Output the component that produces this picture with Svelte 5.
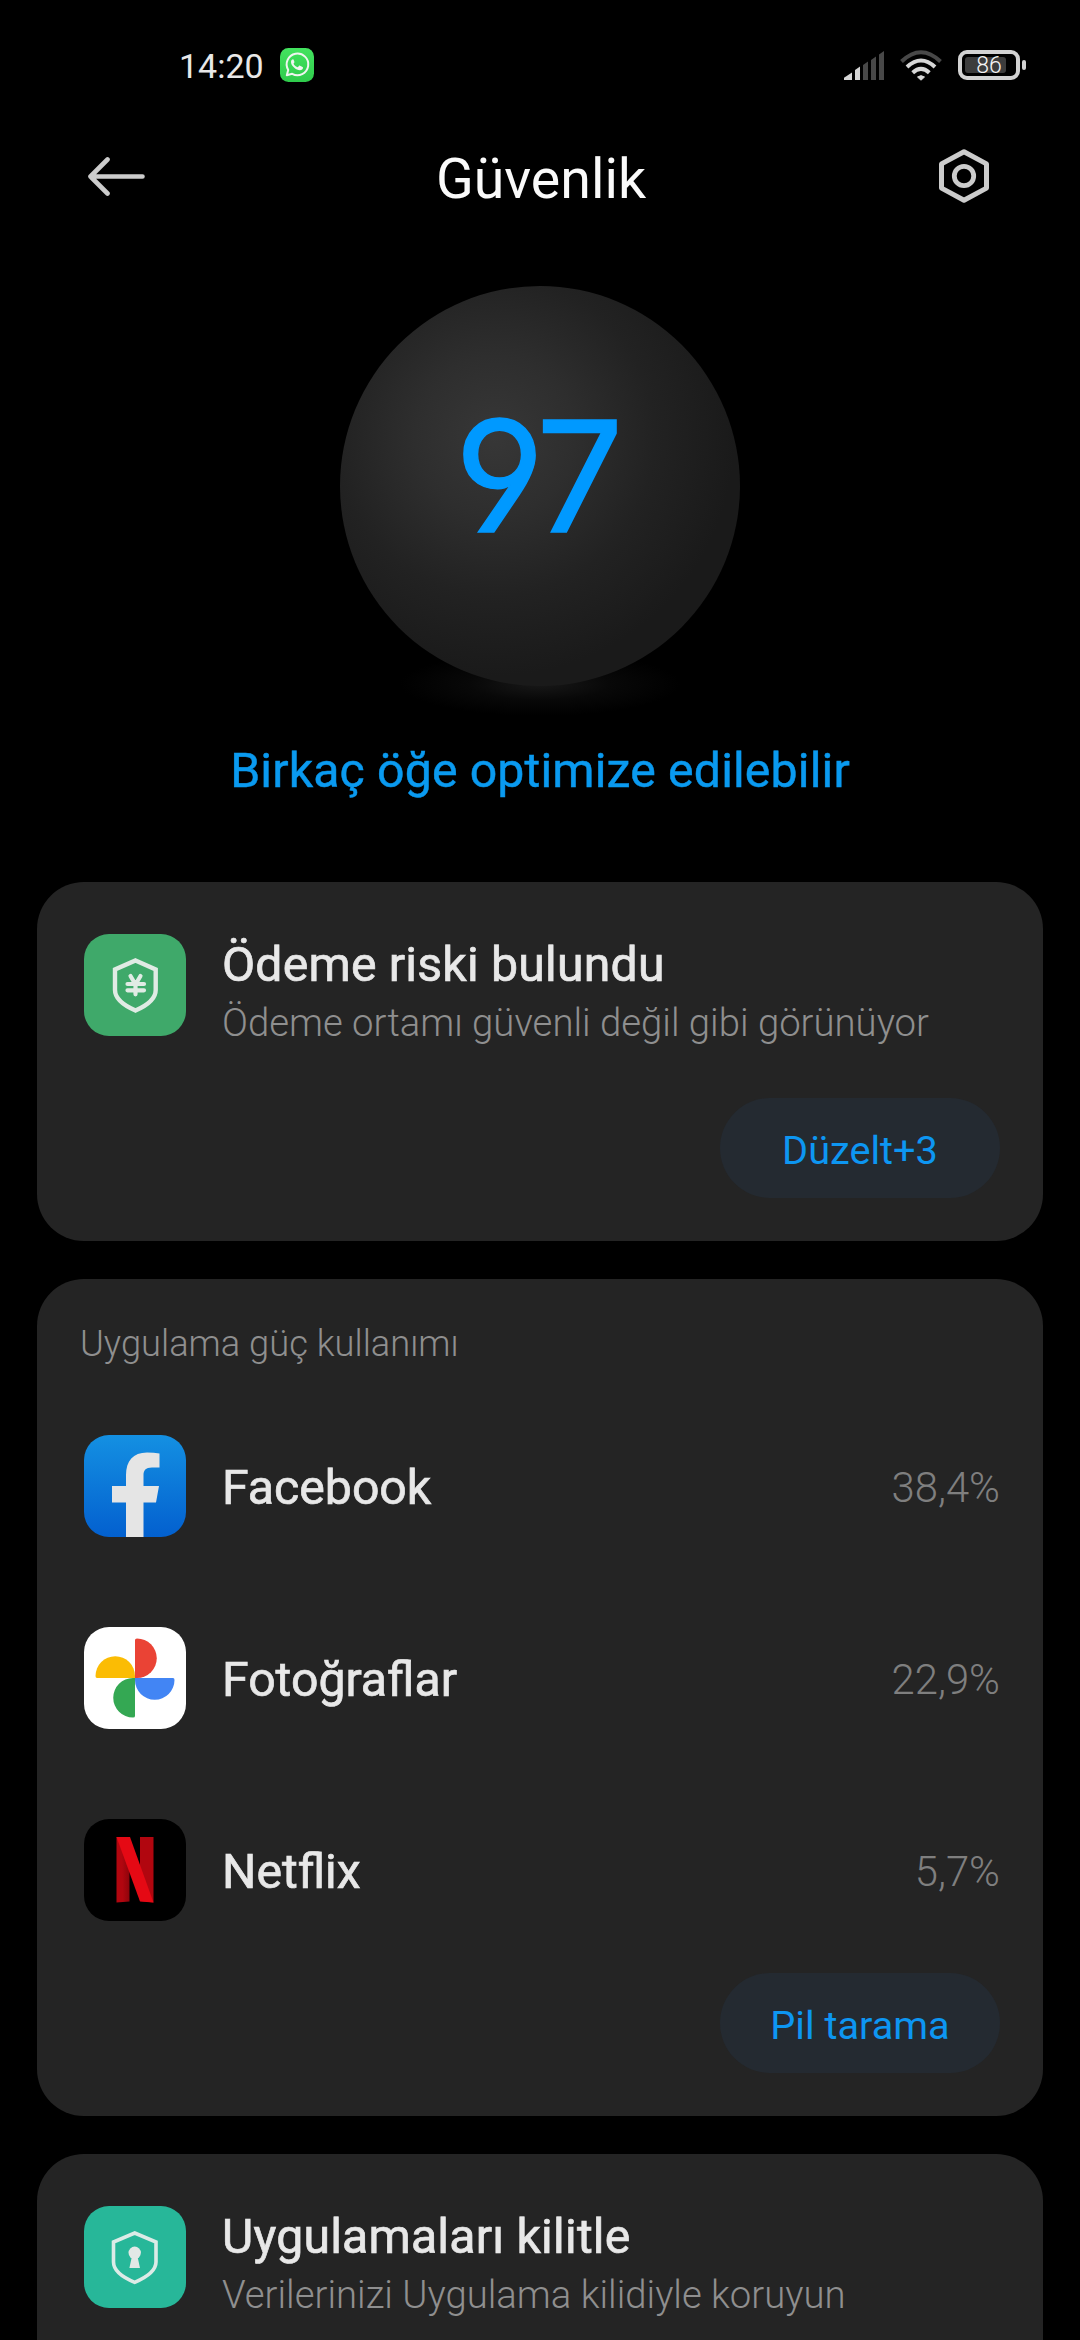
<script lang="ts">
	const apps = [
		{ id: 'facebook', name: 'Facebook', usage: '38,4%' },
		{ id: 'photos', name: 'Fotoğraflar', usage: '22,9%' },
		{ id: 'netflix', name: 'Netflix', usage: '5,7%' }
	];

	let score = 97;
	let battery = 86;
</script>

<svelte:head>
	<title>Güvenlik</title>
</svelte:head>

<div class="screen">
	<div class="status-bar">
		<div class="status-left">
			<span class="time">14:20</span>
			<svg class="whatsapp" viewBox="0 0 34 34">
				<defs>
					<linearGradient id="wa" x1="0" y1="0" x2="0" y2="1">
						<stop offset="0" stop-color="#43e35f" />
						<stop offset="1" stop-color="#2fcb4c" />
					</linearGradient>
				</defs>
				<rect width="34" height="34" rx="8.5" fill="url(#wa)" />
				<path d="M6.8 27.2L8.2 21.9A10.8 10.8 0 1 1 12.2 25.8Z" fill="none" stroke="#f0f5f0" stroke-width="2" stroke-linejoin="round" />
				<path d="M13 11.2c-.9 0-2 1.1-2 2.7 0 3.8 5.2 8.3 8.9 8.3 1.8 0 3.1-1.2 3.1-2.5 0-.6-.3-.8-3-2-.6-.2-.8-.1-1.9 1.3-.3.3-.6.3-1 .1-1.500-.7-2.700-1.800-3.400-3.200-.2-.4-.1-.5.500-1.200.3-.4.3-.6.1-1.200-.8-2-.8-2.200-1.300-2.300z" fill="#f0f5f0" />
			</svg>
		</div>
		<div class="status-right">
			<svg class="signal" viewBox="0 0 40 29">
				<path d="M0 29v-2.2L8 21.5V29z" fill="#d6d6d6" />
				<path d="M11 29V19l5-3.5V29z" fill="#d6d6d6" />
				<path d="M19 29V14l5-3.5V29zM27 29V9l5-3.5V29zM35 29V3.5L40 0V29z" fill="#484848" />
			</svg>
			<svg class="wifi" viewBox="0 0 42 31">
				<g fill="none" stroke-width="4">
					<path d="M1.5 11.5Q21-7 40.5 11.5" stroke="#484848" />
					<path d="M7 17Q21 4 35 17" stroke="#d6d6d6" />
					<path d="M12.7 22.7Q21 15 29.3 22.7" stroke="#d6d6d6" />
				</g>
				<path d="M17.5 27Q21 24.3 24.5 27L21 30.2Z" fill="#d6d6d6" stroke="#d6d6d6" stroke-linejoin="round" />
			</svg>
			<div class="battery">
				<div class="battery-body">
					<div class="battery-fill" style="width: {battery}%"></div>
					<span class="battery-text">{battery}</span>
				</div>
				<div class="battery-tip"></div>
			</div>
		</div>
	</div>

	<header class="header">
		<svg class="back" viewBox="0 0 57 39">
			<path d="M19.5 2.5L2.5 19.5L19.5 36.5M2.5 19.5H54.5" fill="none" stroke="#ccc" stroke-width="4.6" stroke-linecap="round" stroke-linejoin="round" />
		</svg>
		<h1>Güvenlik</h1>
		<svg class="settings" viewBox="0 0 50 54">
			<path d="M25 2.7L47.5 14.9V39.1L25 51.3L2.5 39.1V14.9Z" fill="none" stroke="#ccc" stroke-width="5" stroke-linejoin="round" />
			<circle cx="25" cy="27" r="9.7" fill="none" stroke="#ccc" stroke-width="4.8" />
		</svg>
	</header>

	<section class="hero">
		<div class="orb">
			<span class="score">{score}</span>
		</div>
		<p class="hint">Birkaç öğe optimize edilebilir</p>
	</section>

	<div class="cards">
		<section class="card">
			<div class="feature">
				<svg class="icon" viewBox="0 0 102 102">
					<rect width="102" height="102" rx="25" fill="#3fa96a" />
					<path d="M51.5 26.5L71.7 35.5V56C71.7 65 63 71.5 51.5 76.5C40 71.5 31 65 31 56V35.5Z" fill="none" stroke="#e0ebe4" stroke-width="4.4" />
					<path d="M46.5 42L51.5 50.5L56.5 42M51.5 50V60.3M43.5 50H60M43.5 56.3H60" fill="none" stroke="#e0ebe4" stroke-width="4.2" stroke-linecap="round" stroke-linejoin="round" />
				</svg>
				<div class="feature-text">
					<h2>Ödeme riski bulundu</h2>
					<p>Ödeme ortamı güvenli değil gibi görünüyor</p>
				</div>
			</div>
			<div class="actions fix">
				<button class="btn">Düzelt+3</button>
			</div>
		</section>

		<section class="card">
			<h3>Uygulama güç kullanımı</h3>
			<ul>
				{#each apps as app (app.id)}
					<li>
						<svg class="icon" viewBox="0 0 102 102">
							{#if app.id === 'facebook'}
								<defs>
									<linearGradient id="fb" x1="0" y1="0" x2="0" y2="1">
										<stop offset="0" stop-color="#1490e2" />
										<stop offset="1" stop-color="#0360cf" />
									</linearGradient>
								</defs>
								<rect width="102" height="102" rx="25" fill="url(#fb)" />
								<path d="M42 102V67.5H28V51H42V40C42 26 49 17.5 63 17.5Q70 17.5 75.5 18.5V32.5H68C61.5 32.5 59.5 35.5 59.5 40V51H75L72 67.5H59.5V102Z" fill="#e5e5e5" />
							{:else if app.id === 'photos'}
								<rect width="102" height="102" rx="25" fill="#fff" />
								<path d="M51 51V13Q51 11.5 53 11.5A19.75 19.75 0 0 1 53 51Z" fill="#ea4335" />
								<path d="M51 51H89Q90.5 51 90.5 53A19.75 19.75 0 0 1 51 53Z" fill="#4285f4" />
								<path d="M51 51V89Q51 90.5 49 90.5A19.75 19.75 0 0 1 49 51Z" fill="#34a853" />
								<path d="M51 51H13Q11.5 51 11.5 49A19.75 19.75 0 0 1 51 49Z" fill="#fbbc04" />
							{:else}
								<defs>
									<linearGradient id="nl" x1="0" y1="0.3" x2="1" y2="0.2">
										<stop offset="0.4" stop-color="#b1060f" />
										<stop offset="1" stop-color="#8a040b" />
									</linearGradient>
								</defs>
								<rect width="102" height="102" rx="25" fill="#000" />
								<path d="M32.5 18H45.5V82.5L32.5 83.5Z" fill="url(#nl)" />
								<path d="M56 18H69.5V83.5L56 82Z" fill="#b1060f" />
								<path d="M32.5 18H46L69.5 83.5L56 82.5Z" fill="#e50914" />
							{/if}
						</svg>
						<span class="app-name">{app.name}</span>
						<span class="app-usage">{app.usage}</span>
					</li>
				{/each}
			</ul>
			<div class="actions scan">
				<button class="btn">Pil tarama</button>
			</div>
		</section>

		<section class="card card-lock">
			<div class="feature">
				<svg class="icon" viewBox="0 0 102 102">
					<rect width="102" height="102" rx="25" fill="#27b799" />
					<path d="M50.7 27L72 36V56C72 64.5 62 71.5 50.7 76.3C39 71.5 29.5 64.5 29.5 56V36Z" fill="none" stroke="#dcebe7" stroke-width="3.6" />
					<circle cx="50.7" cy="46.8" r="6.2" fill="#e2e8e6" />
					<path d="M48 50H53.4L56 62H45.4Z" fill="#e2e8e6" />
				</svg>
				<div class="feature-text">
					<h2>Uygulamaları kilitle</h2>
					<p>Verilerinizi Uygulama kilidiyle koruyun</p>
				</div>
			</div>
		</section>
	</div>
</div>

<style>
	:global(body) {
		background: #000;
		overflow: hidden;
	}

	.screen {
		width: 1080px;
		height: 2340px;
		overflow: hidden;
		background: #000;
		color: #e8e8e8;
		font-family: Roboto, 'Noto Sans', sans-serif;
	}

	h1,
	h2,
	h3,
	p,
	ul {
		margin: 0;
		padding: 0;
	}

	svg {
		display: block;
		flex: none;
	}

	.status-bar {
		display: flex;
		justify-content: space-between;
		align-items: center;
		height: 130px;
		padding: 0 54px 0 179px;
		box-sizing: border-box;
	}

	.status-left,
	.status-right {
		display: flex;
		align-items: center;
	}

	.time {
		width: 101px;
		padding-top: 2px;
		font-size: 34px;
		line-height: 40px;
	}

	.whatsapp {
		width: 34px;
		height: 34px;
	}

	.signal {
		width: 40px;
		height: 29px;
		margin-right: 16px;
	}

	.wifi {
		width: 42px;
		height: 31px;
		margin-right: 16px;
	}

	.battery {
		display: flex;
		align-items: center;
		gap: 2px;
	}

	.battery-body {
		position: relative;
		width: 62px;
		height: 30px;
		padding: 3px;
		box-sizing: border-box;
		border: 4px solid #d2d2d2;
		border-radius: 9px;
	}

	.battery-fill {
		height: 100%;
		border-radius: 3px;
		background: #3c3c3c;
	}

	.battery-text {
		position: absolute;
		inset: 0;
		text-align: center;
		font-size: 23px;
		font-weight: 300;
		line-height: 24px;
		color: #f4f4f4;
	}

	.battery-tip {
		width: 4px;
		height: 10px;
		border-radius: 2px;
		background: #d2d2d2;
	}

	.header {
		display: flex;
		justify-content: space-between;
		align-items: center;
		height: 92px;
		padding: 0 91px 0 88px;
	}

	.back {
		width: 57px;
		height: 39px;
	}

	h1 {
		padding: 7px 2px 0 0;
		font-size: 55.5px;
		font-weight: 400;
		line-height: 66px;
		color: #fafafa;
	}

	.settings {
		width: 50px;
		height: 54px;
	}

	.hero {
		display: flex;
		flex-direction: column;
		align-items: center;
		height: 660px;
		padding-top: 64px;
		box-sizing: border-box;
		background: radial-gradient(ellipse 140px 32px at 540px 462px, #181818, #080808 50%, #000);
	}

	.orb {
		display: flex;
		justify-content: center;
		width: 400px;
		height: 400px;
		border-radius: 50%;
		background: radial-gradient(circle at 155px 150px, #373737 0, #2e2e2e 80px, #222 160px, #1a1a1a 240px);
	}

	.score {
		margin: 96px 4px 0 0;
		font-family: Inter, Lato, sans-serif;
		font-feature-settings: 'ss01', 'cv04';
		font-size: 154px;
		font-weight: 400;
		line-height: 188px;
		letter-spacing: -2px;
		color: #0099ff;
		-webkit-text-stroke: 1.5px #0099ff;
	}

	.hint {
		margin-top: 57px;
		font-size: 48.2px;
		line-height: 56px;
		letter-spacing: 0.15px;
		color: #0a9af0;
		-webkit-text-stroke: 0.5px #0a9af0;
	}

	.cards {
		display: flex;
		flex-direction: column;
		gap: 38px;
		padding: 0 37px;
	}

	.card {
		padding: 52px 43px 43px;
		border-radius: 47px;
		background: #242424;
	}

	.card-lock {
		min-height: 264px;
	}

	.feature {
		display: flex;
		height: 102px;
		padding-left: 4px;
	}

	.icon {
		width: 102px;
		height: 102px;
	}

	.feature-text {
		margin-left: 36px;
	}

	h2 {
		padding-top: 1px;
		font-size: 48.2px;
		font-weight: 400;
		line-height: 60px;
		letter-spacing: 0.2px;
		white-space: nowrap;
		-webkit-text-stroke: 0.7px #e8e8e8;
	}

	.feature-text p {
		padding-top: 5px;
		font-size: 38.3px;
		font-weight: 300;
		line-height: 46px;
		color: #8f8f8f;
		white-space: nowrap;
	}

	h3 {
		height: 59px;
		font-size: 36.3px;
		font-weight: 300;
		line-height: 26px;
		color: #8f8f8f;
	}

	ul {
		list-style: none;
	}

	li {
		display: flex;
		align-items: center;
		height: 192px;
		padding-left: 4px;
	}

	.app-name {
		margin-left: 36px;
		padding-top: 3px;
		font-size: 48.2px;
		-webkit-text-stroke: 0.7px #e8e8e8;
	}

	.app-usage {
		margin-left: auto;
		padding-top: 2px;
		font-size: 41.8px;
		font-weight: 300;
		color: #7f7f7f;
	}

	.actions {
		display: flex;
		justify-content: flex-end;
	}

	.fix {
		margin-top: 62px;
	}

	.scan {
		margin-top: 7px;
	}

	.btn {
		width: 280px;
		height: 100px;
		padding: 5px 0 0;
		border: 0;
		border-radius: 50px;
		background: #242a31;
		color: #0d96f2;
		font: inherit;
		font-size: 39.7px;
	}
</style>
